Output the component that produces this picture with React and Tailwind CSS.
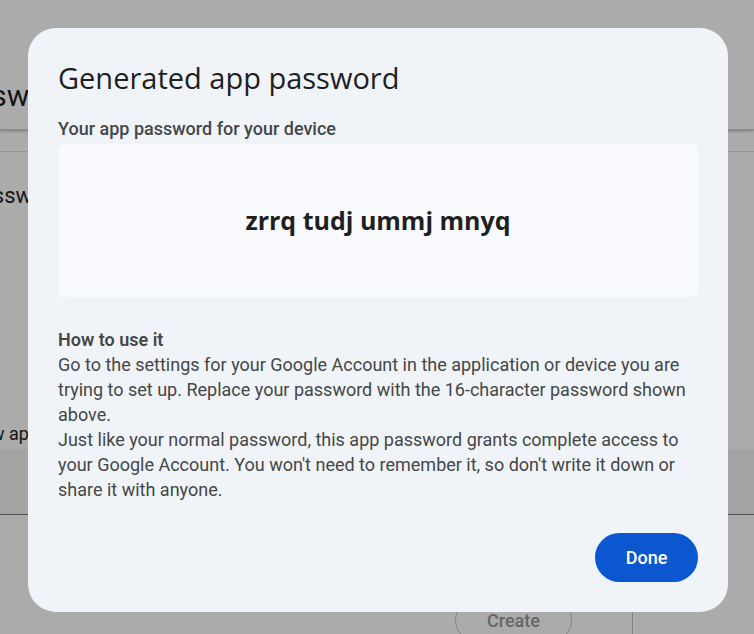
import React from 'react'

const PasswordDialog = () => {
  return (
    <div className="fixed inset-0 z-20 bg-black/[0.33] px-7 pt-7">
      <div className="flex w-[700px] h-[584px] flex-col rounded-[28px] bg-[#f0f4f9] px-[30px] pt-[32px] pb-[30px] font-['Roboto',sans-serif]">
        <h1 className="font-['Open_Sans',sans-serif] text-[29px] leading-[36px] text-[#1f1f1f]">
          Generated app password
        </h1>
        <h2 className="mt-[21px] text-[18px] font-medium leading-6 text-[#444746]">
          Your app password for your device
        </h2>
        <div className="mt-[3px] flex h-[153px] items-center justify-center rounded-lg bg-[#f8fafd]">
          <span className="font-['Open_Sans',sans-serif] text-[25px] font-bold text-[#1f1f1f]">
            zrrq tudj ummj mnyq
          </span>
        </div>
        <div className="mt-[30px] text-[18px] leading-[25px] text-[#444746]">
          <p className="font-semibold">How to use it</p>
          <p>
            Go to the settings for your Google Account in the application or device you are trying to set up.
            Replace your password with the 16-character password shown above.
          </p>
          <p>
            Just like your normal password, this app password grants complete access to your Google Account.
            You won't need to remember it, so don't write it down or share it with anyone.
          </p>
        </div>
        <div className="mt-auto flex justify-end">
          <button className="h-[49px] w-[103px] rounded-full bg-[#0b57d0] text-[18px] font-medium text-white">
            Done
          </button>
        </div>
      </div>
    </div>
  )
}

const App = () => {
  return (
    <div className="relative min-h-screen overflow-hidden bg-white font-['Roboto',sans-serif] text-[#1f1f1f]">
      {/* page behind the dialog */}
      <div className="h-[130px] border-b border-[#d0d0d0] shadow-[0_1px_3px_rgba(0,0,0,0.3)] pt-[78px]">
        <div className="-ml-[118px] text-[30px] leading-9">App passwords</div>
      </div>
      <div className="mt-[21px] border-t border-[#e0e0e0] pt-[30px]">
        <div className="-ml-[76px] text-[22px] leading-7">App passwords</div>
      </div>
      <div className="mt-[212px] -ml-[122px] text-[18px] leading-6">To create a new app password</div>
      <div className="mt-[3px] h-[66px] border-b border-[#747775] bg-[#f5f5f5]"></div>
      <div className="mt-[83px] flex">
        <div className="ml-[455px] flex h-[44px] w-[117px] items-center justify-center rounded-full border border-[#c4c7c5] text-[18px] font-medium text-[#9a9a9a]">
          Create
        </div>
        <div className="ml-[60px] h-[44px] border-l border-[#c4c7c5]"></div>
      </div>
      <PasswordDialog />
    </div>
  )
}

export default App
